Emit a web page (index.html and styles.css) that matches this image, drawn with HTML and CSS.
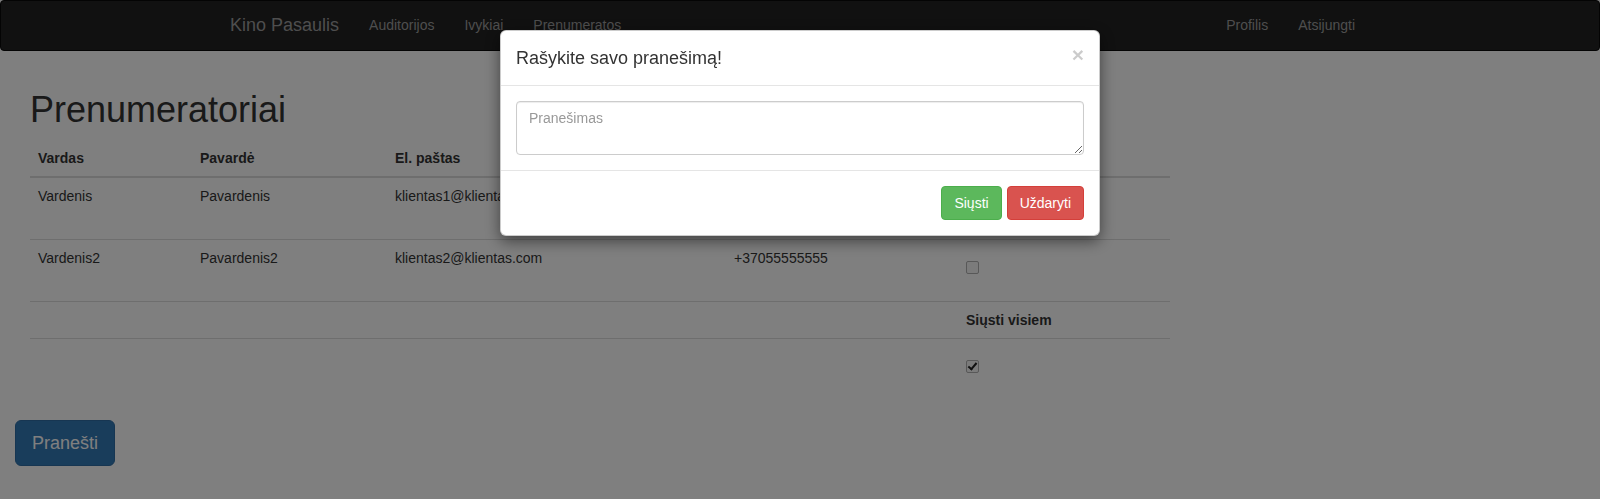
FILE: index.html
```html
<!DOCTYPE html>
<html lang="lt">
<head>
<meta charset="utf-8">
<title>Prenumeratoriai</title>
<link rel="stylesheet" href="styles.css">
</head>
<body>
<nav class="navbar">
  <div class="nav-inner">
    <a class="brand" href="#">Kino Pasaulis</a>
    <ul class="nav">
      <li><a href="#">Auditorijos</a></li>
      <li><a href="#">Ivykiai</a></li>
      <li><a href="#">Prenumeratos</a></li>
    </ul>
    <ul class="nav nav-right">
      <li><a href="#">Profilis</a></li>
      <li><a href="#">Atsijungti</a></li>
    </ul>
  </div>
</nav>

<div class="page">
  <div class="main">
    <h1 class="title">Prenumeratoriai</h1>
    <table class="table">
      <colgroup>
        <col class="c1"><col class="c2"><col class="c3"><col class="c4"><col class="c5">
      </colgroup>
      <thead>
        <tr>
          <th>Vardas</th>
          <th>Pavardė</th>
          <th>El. paštas</th>
          <th>Telefonas</th>
          <th>Siųsti</th>
        </tr>
      </thead>
      <tbody>
        <tr>
          <td>Vardenis</td>
          <td>Pavardenis</td>
          <td>klientas1@klientas.com</td>
          <td>+37066666666</td>
          <td><div class="checkbox"><input type="checkbox" class="cb"></div></td>
        </tr>
        <tr>
          <td>Vardenis2</td>
          <td>Pavardenis2</td>
          <td>klientas2@klientas.com</td>
          <td>+37055555555</td>
          <td><div class="checkbox"><input type="checkbox" class="cb"></div></td>
        </tr>
        <tr>
          <td></td><td></td><td></td><td></td>
          <th>Siųsti visiem</th>
        </tr>
        <tr>
          <td></td><td></td><td></td><td></td>
          <td><div class="checkbox"><input type="checkbox" class="cb" checked></div></td>
        </tr>
      </tbody>
    </table>
  </div>
  <button class="btn btn-primary btn-lg" type="button">Pranešti</button>
</div>

<div class="backdrop"></div>

<div class="modal">
  <div class="modal-dialog">
    <div class="modal-content">
      <div class="modal-header">
        <h4 class="modal-title">Rašykite savo pranešimą!</h4>
        <button class="close" type="button">×</button>
      </div>
      <div class="modal-body">
        <textarea class="form-control" rows="2" placeholder="Pranešimas"></textarea>
      </div>
      <div class="modal-footer">
        <button class="btn btn-success" type="button">Siųsti</button>
        <button class="btn btn-danger" type="button">Uždaryti</button>
      </div>
    </div>
  </div>
</div>
</body>
</html>
```

FILE: styles.css
```css
* { box-sizing: border-box; }

html, body {
  margin: 0;
  padding: 0;
}

body {
  font-family: "Liberation Sans", Arial, Helvetica, sans-serif;
  font-size: 14px;
  line-height: 1.42857143;
  color: #333;
  background: #fff;
  height: 499px;
  overflow: hidden;
}

a { text-decoration: none; }

/* Navbar */
.navbar {
  background: #222;
  border: 1px solid #080808;
  border-radius: 4px;
  min-height: 50px;
  margin-bottom: 20px;
}

.nav-inner {
  width: 1170px;
  margin: 0 auto;
  padding: 0 15px;
  display: flex;
  align-items: flex-start;
}

.brand {
  display: block;
  margin-left: -15px;
  padding: 14px 15px 15px;
  font-size: 18px;
  line-height: 20px;
  color: #9d9d9d;
}

.nav {
  list-style: none;
  margin: 0;
  padding: 0;
  display: flex;
}

.nav a {
  display: block;
  padding: 14px 15px 15px;
  line-height: 20px;
  color: #9d9d9d;
}

.nav-right {
  margin-left: auto;
}

/* Page */
.page {
  padding: 19px 15px 0;
}

.main {
  width: 1170px;
  padding: 0 15px;
}

.title {
  margin: 0 0 10px;
  font-size: 36px;
  font-weight: 500;
  line-height: 1.1;
  color: #333;
}

.table {
  width: 100%;
  table-layout: fixed;
  border-collapse: collapse;
  border-spacing: 0;
  margin-bottom: 20px;
}

.c1 { width: 162px; }
.c2 { width: 195px; }
.c3 { width: 339px; }
.c4 { width: 232px; }
.c5 { width: 212px; }

.table th,
.table td {
  padding: 8px;
  text-align: left;
  vertical-align: top;
  line-height: 1.42857143;
  border-top: 1px solid #ddd;
  white-space: nowrap;
  overflow: hidden;
}

.table thead th {
  vertical-align: bottom;
  border-top: 0;
  border-bottom: 2px solid #ddd;
}

.checkbox {
  margin: 13px 0 0;
  height: 32px;
}

.cb {
  -webkit-appearance: none;
  appearance: none;
  display: block;
  position: relative;
  width: 13px;
  height: 13px;
  margin: 0;
  border: 1px solid #b0b0b0;
  border-radius: 2px;
  background: #f6f6f6;
}

.cb:checked::after {
  content: "";
  position: absolute;
  left: 3px;
  top: 0px;
  width: 3px;
  height: 7px;
  border: solid #222;
  border-width: 0 2px 2px 0;
  transform: rotate(40deg);
}

/* Buttons */
.btn {
  display: inline-block;
  font-family: inherit;
  font-size: 14px;
  line-height: 20px;
  padding: 6px 12px;
  border: 1px solid transparent;
  border-radius: 4px;
  color: #fff;
  cursor: pointer;
}

.btn-lg {
  font-size: 18px;
  line-height: 1.3333333;
  padding: 10px 16px;
  border-radius: 6px;
}

.btn-primary { background: #337ab7; border-color: #2e6da4; }
.btn-success { background: #5cb85c; border-color: #4cae4c; }
.btn-danger  { background: #d9534f; border-color: #d43f3a; }

/* Modal */
.backdrop {
  position: fixed;
  inset: 0;
  background: #000;
  opacity: 0.5;
}

.modal {
  position: fixed;
  inset: 0;
}

.modal-dialog {
  width: 600px;
  margin: 30px auto;
}

.modal-content {
  background: #fff;
  border: 1px solid rgba(0, 0, 0, 0.2);
  border-radius: 6px;
  box-shadow: 0 5px 15px rgba(0, 0, 0, 0.5);
}

.modal-header {
  display: flex;
  justify-content: space-between;
  align-items: flex-start;
  padding: 15px;
  border-bottom: 1px solid #e5e5e5;
}

.modal-title {
  margin: 0;
  font-size: 18px;
  font-weight: 500;
  line-height: 24px;
  color: #333;
}

.close {
  margin-top: -2px;
  padding: 0;
  background: transparent;
  border: 0;
  font-family: inherit;
  font-size: 21px;
  font-weight: 700;
  line-height: 1;
  color: #000;
  opacity: 0.2;
  cursor: pointer;
}

.modal-body {
  padding: 15px;
}

.form-control {
  display: block;
  width: 100%;
  height: 54px;
  padding: 6px 12px;
  font-family: inherit;
  font-size: 14px;
  line-height: 1.42857143;
  color: #555;
  background: #fff;
  border: 1px solid #ccc;
  border-radius: 4px;
  box-shadow: inset 0 1px 1px rgba(0, 0, 0, 0.075);
  resize: vertical;
}

.form-control::placeholder {
  color: #999;
}

.modal-footer {
  display: flex;
  justify-content: flex-end;
  gap: 5px;
  padding: 15px;
  border-top: 1px solid #e5e5e5;
}
```
